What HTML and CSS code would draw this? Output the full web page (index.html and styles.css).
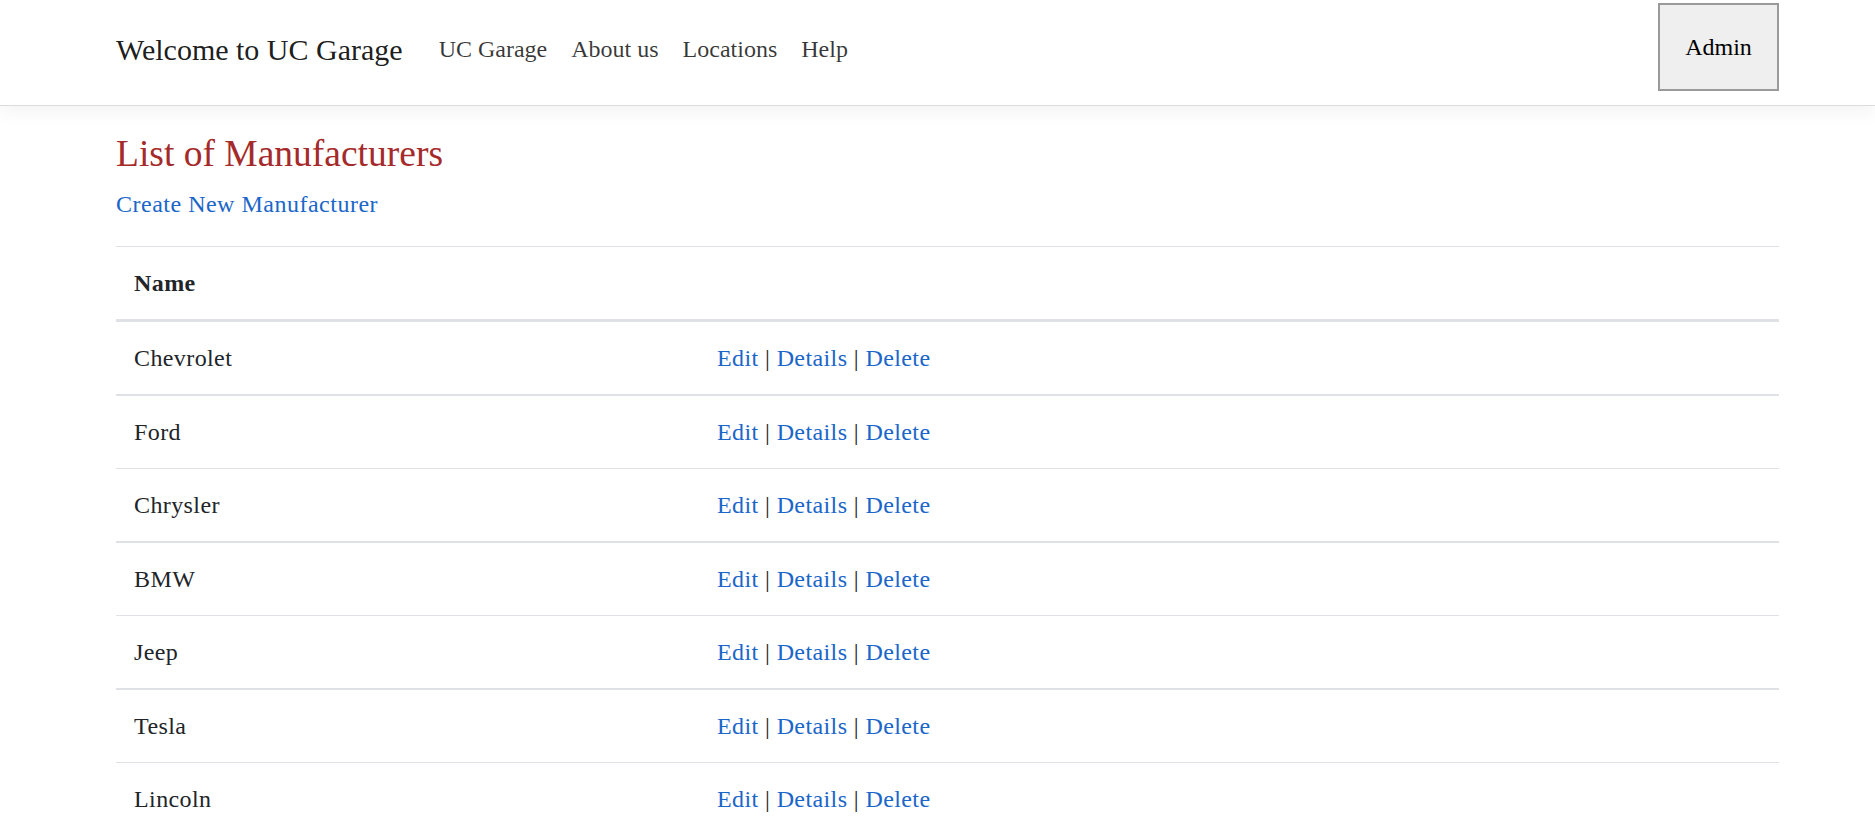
FILE: index.html
```html
<!DOCTYPE html>
<html lang="en">
<head>
<meta charset="utf-8">
<title>List of Manufacturers - UC Garage</title>
<link rel="stylesheet" href="styles.css">
</head>
<body>
<header class="site-header">
  <div class="header-inner">
    <nav class="nav">
      <a class="brand" href="#">Welcome to UC Garage</a>
      <ul class="nav-list">
        <li><a class="nav-link" href="#">UC Garage</a></li>
        <li><a class="nav-link" href="#">About us</a></li>
        <li><a class="nav-link" href="#">Locations</a></li>
        <li><a class="nav-link" href="#">Help</a></li>
      </ul>
    </nav>
    <button class="admin-btn" type="button">Admin</button>
  </div>
</header>
<main class="main">
  <h2 class="page-title">List of Manufacturers</h2>
  <p class="create"><a href="#">Create New Manufacturer</a></p>
  <table class="table">
    <thead>
      <tr><th class="col-name">Name</th><th></th></tr>
    </thead>
    <tbody>
      <tr><td>Chevrolet</td><td><a href="#">Edit</a> | <a href="#">Details</a> | <a href="#">Delete</a></td></tr>
      <tr><td>Ford</td><td><a href="#">Edit</a> | <a href="#">Details</a> | <a href="#">Delete</a></td></tr>
      <tr><td>Chrysler</td><td><a href="#">Edit</a> | <a href="#">Details</a> | <a href="#">Delete</a></td></tr>
      <tr><td>BMW</td><td><a href="#">Edit</a> | <a href="#">Details</a> | <a href="#">Delete</a></td></tr>
      <tr><td>Jeep</td><td><a href="#">Edit</a> | <a href="#">Details</a> | <a href="#">Delete</a></td></tr>
      <tr><td>Tesla</td><td><a href="#">Edit</a> | <a href="#">Details</a> | <a href="#">Delete</a></td></tr>
      <tr><td>Lincoln</td><td><a href="#">Edit</a> | <a href="#">Details</a> | <a href="#">Delete</a></td></tr>
    </tbody>
  </table>
</main>
</body>
</html>
```
FILE: styles.css
```css
* { box-sizing: border-box; }
html, body { margin: 0; padding: 0; }
body {
  font-family: "Liberation Serif", "DejaVu Serif", serif;
  font-size: 24px;
  line-height: 36px;
  color: #212529;
  background: #fff;
  overflow: hidden;
}
a { color: #1b66c9; text-decoration: none; }

.site-header {
  border-bottom: 1px solid #dcdcdc;
  box-shadow: 0 6px 18px rgba(0, 0, 0, 0.05);
  padding: 3px 0 14px;
}
.header-inner {
  display: flex;
  align-items: center;
  justify-content: space-between;
  margin-left: 116px;
  width: 1663px;
  height: 88px;
}
.nav { display: flex; align-items: center; padding-top: 4px; }
.brand {
  font-size: 30px;
  line-height: 45px;
  color: rgba(0, 0, 0, 0.9);
  margin-right: 24px;
}
.nav-list { display: flex; list-style: none; margin: 0; padding: 0; }
.nav-link {
  display: block;
  padding: 0 12px;
  color: rgba(0, 0, 0, 0.78);
}
.admin-btn {
  width: 121px;
  height: 88px;
  font-family: inherit;
  font-size: 24px;
  color: #000;
  background: #efefef;
  border: 2px solid #9a9a9a;
  padding: 0;
}

.main {
  margin-left: 116px;
  width: 1663px;
  padding-top: 24px;
  letter-spacing: 0.4px;
}
.page-title {
  font-size: 37.5px;
  line-height: 48px;
  font-weight: normal;
  color: #a52a2a;
  margin: 0 0 8px;
  letter-spacing: 0;
}
.create { margin: 0 0 24px; letter-spacing: 0.5px; }

.table {
  width: 100%;
  border-collapse: collapse;
  border-top: 1px solid #dee2e6;
}
.table th, .table td {
  padding: 18px;
  text-align: left;
  vertical-align: top;
}
.table th { font-weight: bold; border-bottom: 3px solid #dee2e6; }
.col-name { width: 583px; }
.table tbody tr:nth-child(odd) td { border-bottom: 2px solid #dee2e6; }
.table tbody tr:nth-child(even) td { border-bottom: 1px solid #dee2e6; }
```
